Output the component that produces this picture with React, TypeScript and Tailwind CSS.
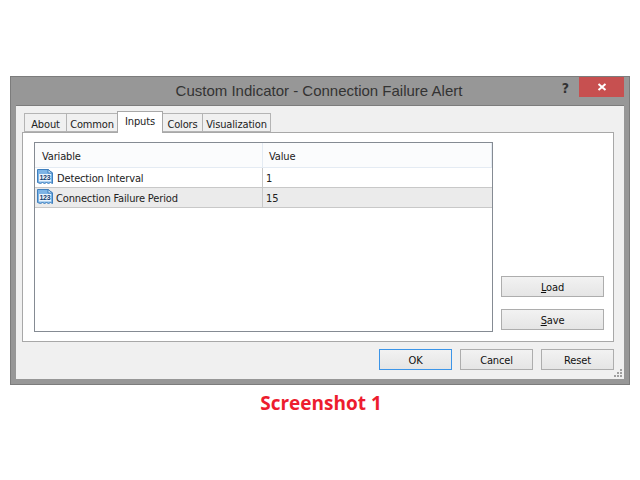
const font = { fontFamily: '"DejaVu Sans Condensed", "DejaVu Sans", sans-serif', fontStretch: "condensed" };

function Icon123() {
  return (
    <svg width="16" height="16" viewBox="0 0 16 16" className="shrink-0 mb-[2px]">
      <path d="M0.5 0.5 L11 0.5 L15.5 4 L15.5 14.5 L13.5 13.5 L11.5 14.5 L9.5 13.5 L7.5 14.5 L5.5 13.5 L3.5 14.5 L0.5 13.5 Z" fill="#7db4e6" stroke="#3f7fbd" strokeWidth="1" />
      <path d="M11 0.5 L11 4 L15.5 4 Z" fill="#e4f0fb" stroke="#3f7fbd" strokeWidth="1" />
      <rect x="2" y="5" width="12" height="7.5" fill="#eaf3fc" />
      <text x="8" y="11.4" textAnchor="middle" fontSize="7" fontWeight="700" fill="#123f70" fontFamily="Liberation Sans">123</text>
    </svg>
  );
}

function Tab({ label, active, w }: { label: string; active?: boolean; w: string }) {
  return active ? (
    <div className={`${w} h-[22px] -mb-px relative z-10 bg-white border border-b-0 border-[#a8a8a8] text-center text-[11px] tracking-[-0.15px] leading-[20px] text-[#222]`}>{label}</div>
  ) : (
    <div className={`${w} h-[19px] ml-[-1px] first:ml-0 bg-[#f0f0f0] border border-[#b4b4b4] text-center text-[11px] tracking-[-0.15px] leading-[22px] text-[#222]`}>{label}</div>
  );
}

function Btn({ children, primary, w = "w-[103px]" }: { children: React.ReactNode; primary?: boolean; w?: string }) {
  return (
    <div className={`${w} h-[21px] border ${primary ? "border-[#3c95e8]" : "border-[#adadad]"} bg-gradient-to-b from-[#f2f2f2] to-[#e5e5e5] flex items-center justify-center pt-[4px] text-[11px] tracking-[-0.15px] text-[#111]`}>
      {children}
    </div>
  );
}

function Row({ name, value, alt, pad }: { name: string; value: string; alt?: boolean; pad: string }) {
  return (
    <div className={`flex h-[20px] border-b ${alt ? "bg-[#ebebeb] border-[#c8c8c8]" : "bg-white border-[#c8c8c8]"} text-[11px] tracking-[-0.15px] text-[#222]`}>
      <div className="w-[228px] flex items-center pl-[2px] border-r border-[#c8c8c8]">
        <Icon123 />
        <span className={`${pad} pt-[4px]`}>{name}</span>
      </div>
      <div className="flex-1 pl-[3px] pt-[4px] flex items-center">{value}</div>
    </div>
  );
}

export default function App() {
  return (
    <div className="w-[640px] h-[480px] bg-white pt-[76px] pl-[10px]" style={font}>
      <div className="w-[620px] h-[309px] bg-[#979797] border border-[#7c7c7c] flex flex-col px-[5px] pb-[5px]">
        <div className="h-[28px] shrink-0 flex items-start">
          <div className="flex-1 text-center text-[15px] leading-[27px] text-[#333] pl-[70px]" style={{ fontFamily: '"Liberation Sans", sans-serif', fontStretch: "normal" }}>Custom Indicator - Connection Failure Alert</div>
          <div className="w-[27px] text-right pr-[10px] text-[14px] font-bold text-[#333] leading-[20px] pt-[1px]">?</div>
          <div className="w-[45px] h-[20px] bg-[#c75050] flex items-center justify-center">
            <svg width="10" height="10" viewBox="0 0 10 10"><path d="M1.5 2 L8.5 8 M8.5 2 L1.5 8" stroke="#fff" strokeWidth="2" /></svg>
          </div>
        </div>
        <div className="flex-1 bg-[#f0f0f0] border-t border-[#7c7c7c] px-[6px] pt-[7px] flex flex-col relative">
          <div className="flex items-end h-[19px] pl-[2px]">
            <Tab label="About" w="w-[43px]" />
            <Tab label="Common" w="w-[52px]" />
            <Tab label="Inputs" active w="w-[46px] ml-[-1px]" />
            <Tab label="Colors" w="w-[41px]" />
            <Tab label="Visualization" w="w-[69px]" />
          </div>
          <div className="w-[592px] h-[210px] bg-white border border-[#a8a8a8] pt-[9px] pl-[11px] flex gap-[8px]">
            <div className="w-[459px] h-[190px] border border-[#858b93]">
              <div className="flex h-[25px] text-[11px] tracking-[-0.15px] text-[#222] bg-[#fbfcfd] border-b border-[#e4ebf3] border-r">
                <div className="w-[228px] pl-[7px] leading-[28px] border-r border-[#e4ebf3]">Variable</div>
                <div className="pl-[6px] leading-[28px]">Value</div>
              </div>
              <Row name="Detection Interval" value="1" pad="ml-[4px]" />
              <Row name="Connection Failure Period" value="15" alt pad="ml-[3px]" />
            </div>
            <div className="flex flex-col justify-end gap-[12px] pb-[11px]">
              <Btn><span><span className="underline">L</span>oad</span></Btn>
              <Btn><span><span className="underline">S</span>ave</span></Btn>
            </div>
          </div>
          <div className="flex justify-end gap-[8px] mt-[7px] pr-[4px]">
            <Btn primary w="w-[73px]">OK</Btn>
            <Btn w="w-[73px]">Cancel</Btn>
            <Btn w="w-[73px]">Reset</Btn>
          </div>
          <svg width="9" height="9" viewBox="0 0 9 9" className="absolute right-[1px] bottom-[1px]">
            <g fill="#a0a0a0"><rect x="6" y="0" width="2" height="2" /><rect x="3" y="3" width="2" height="2" /><rect x="6" y="3" width="2" height="2" /><rect x="0" y="6" width="2" height="2" /><rect x="3" y="6" width="2" height="2" /><rect x="6" y="6" width="2" height="2" /></g>
          </svg>
        </div>
      </div>
      <div className="w-[622px] text-center text-[19px] font-bold text-[#ed1c2e] mt-[5px] leading-[27px]" style={{ fontFamily: '"Open Sans", sans-serif', fontStretch: "normal" }}>Screenshot 1</div>
    </div>
  );
}
